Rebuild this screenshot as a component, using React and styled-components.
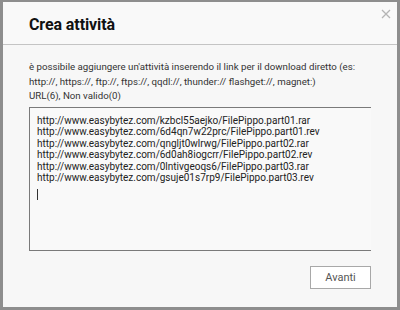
import React from "react";
import styled, { createGlobalStyle } from "styled-components";

const Global = createGlobalStyle`
  html, body { margin: 0; padding: 0; background: #8a8a8a; }
  * { box-sizing: border-box; }
`;

const Dialog = styled.div`
  width: 400px;
  height: 310px;
  display: flex;
  flex-direction: column;
  border-style: solid;
  border-color: #8e8e8e;
  border-width: 2px 3px 3px 3px;
  background: #f7f7f7;
  font-family: Roboto, "Liberation Sans", sans-serif;
  position: relative;
`;

const Header = styled.div`
  height: 43px;
  flex: none;
  display: flex;
  align-items: center;
  padding: 2px 0 0 26px;
  border-bottom: 1px solid #c4c4c4;
  background: #f9f9f9;
`;

const Title = styled.h1`
  margin: 0;
  font-size: 16px;
  font-weight: 700;
  color: #111;
  letter-spacing: -0.1px;
`;

const Close = styled.button`
  position: absolute;
  top: 6px;
  right: 5px;
  width: 12px;
  height: 12px;
  padding: 0;
  border: none;
  background: none;
  display: flex;
  align-items: center;
  justify-content: center;
`;

const Body = styled.div`
  flex: 1;
  display: flex;
  flex-direction: column;
  padding: 15px 26px 0 26px;
`;

const Info = styled.p`
  margin: 0;
  font-size: 9.7px;
  line-height: 14.5px;
  color: #333;
`;

const UrlBox = styled.div`
  margin-top: 3px;
  height: 144px;
  width: 342px;
  border-style: solid;
  border-color: #7a7a7a;
  border-width: 1px 0 1px 1px;
  background: #f9f9f9;
  padding: 7px 7px;
  font-size: 10px;
  line-height: 11.6px;
  color: #222;
`;

const UrlLine = styled.div`
  white-space: nowrap;
`;

const Caret = styled.div`
  width: 1px;
  height: 11px;
  background: #333;
  margin-top: 5px;
`;

const Footer = styled.div`
  display: flex;
  justify-content: flex-end;
  padding-top: 15px;
  width: 342px;
`;

const Button = styled.button`
  width: 61px;
  height: 23px;
  border: 1px solid #a8a8a8;
  background: #fff;
  color: #555;
  font-family: Roboto, "Liberation Sans", sans-serif;
  font-size: 11px;
  padding: 0;
`;

const urls = [
  "http://www.easybytez.com/kzbcl55aejko/FilePippo.part01.rar",
  "http://www.easybytez.com/6d4qn7w22prc/FilePippo.part01.rev",
  "http://www.easybytez.com/qngljt0wlrwg/FilePippo.part02.rar",
  "http://www.easybytez.com/6d0ah8iogcrr/FilePippo.part02.rev",
  "http://www.easybytez.com/0lntivgeoqs6/FilePippo.part03.rar",
  "http://www.easybytez.com/gsuje01s7rp9/FilePippo.part03.rev",
];

export default function App() {
  return (
    <>
      <Global />
      <Dialog>
        <Header>
          <Title>Crea attività</Title>
        </Header>
        <Close aria-label="Chiudi">
          <svg width="10" height="10" viewBox="0 0 10 10">
            <path d="M1 1 L9 9 M9 1 L1 9" stroke="#b5b5b5" strokeWidth="1.3" />
          </svg>
        </Close>
        <Body>
          <Info>
            è possibile aggiungere un'attività inserendo il link per il download diretto (es:
            <br />
            http://, https://, ftp://, ftps://, qqdl://, thunder:// flashget://, magnet:)
            <br />
            URL(6), Non valido(0)
          </Info>
          <UrlBox>
            {urls.map((u) => (
              <UrlLine key={u}>{u}</UrlLine>
            ))}
            <Caret />
          </UrlBox>
          <Footer>
            <Button>Avanti</Button>
          </Footer>
        </Body>
      </Dialog>
    </>
  );
}
